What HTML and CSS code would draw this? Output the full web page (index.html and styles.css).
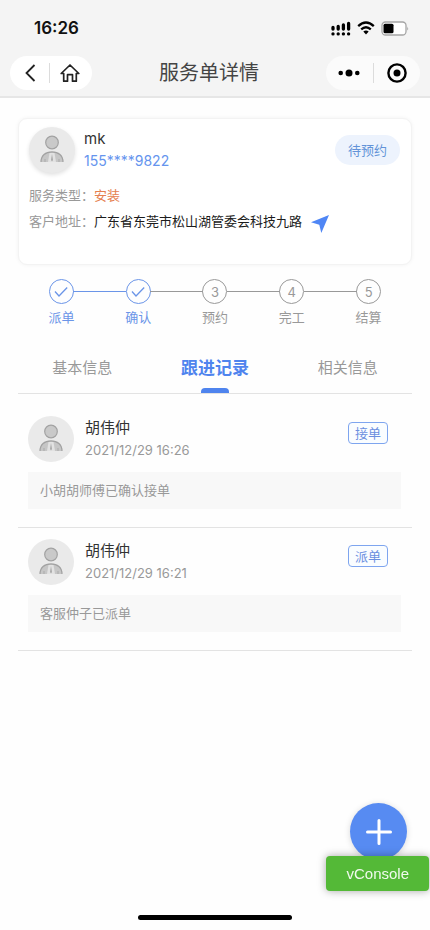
FILE: index.html
```html
<!DOCTYPE html>
<html lang="zh-CN">
<head>
<meta charset="utf-8">
<meta name="viewport" content="width=device-width, initial-scale=1">
<title>服务单详情</title>
<link rel="stylesheet" href="styles.css">
</head>
<body>
<svg class="defs" aria-hidden="true">
  <symbol id="person" viewBox="0 0 46 46">
    <circle cx="23" cy="15.500" r="6.300" fill="#c9c9c9" stroke="#a2a2a2" stroke-width="1.200"/>
    <path d="M12 35C12 28.500 16.500 25 23 25s11 3.500 11 10z" fill="#c6c6c6"/>
    <path d="M20.500 26 19 35h8l-1.500-9z" fill="#e2e2e2"/>
    <path d="m23 27-1 6 1 1.500 1-1.500z" fill="#a8a8a8"/>
    <path d="M12 35C12 28.500 16.500 24.800 23 24.800s11 3.700 11 10.200" fill="none" stroke="#a2a2a2" stroke-width="1.200"/>
    <path d="M16 32v3M30 32v3" stroke="#aaa"/>
  </symbol>
</svg>

<header class="header">
  <div class="status">
    <span class="time">16:26</span>
    <div class="signals">
      <svg width="20" height="15" viewBox="0 0 20 15" aria-label="信号">
        <g stroke="#000" stroke-width="3.300" stroke-linecap="round">
          <path d="M2 6.500V8M7.200 5.500V8M12.400 4V8M17.600 2.500V8"/>
          <path d="M2 12.800v.1M7.200 12.800v.1M12.400 12.800v.1M17.600 12.800v.1"/>
        </g>
      </svg>
      <svg width="18" height="14" viewBox="0 0 18 14" aria-label="无线网络">
        <g fill="none" stroke="#000" stroke-width="2.300">
          <path d="M1.200 5.200Q9-2.300 16.800 5.200"/>
          <path d="M4.200 8.400Q9 4 13.800 8.400"/>
        </g>
        <path d="M6.300 10.500Q9 8.600 11.700 10.500L9 13.400z"/>
      </svg>
      <svg width="28" height="15" viewBox="0 0 28 15" aria-label="电池">
        <rect x="1" y="1" width="24" height="13" rx="3.500" fill="#fff" stroke="#a5a5a5" stroke-width="1.300"/>
        <rect x="2.500" y="2.800" width="10" height="9.400" rx="1.500"/>
        <path d="M26.300 5.500q1.500 2 0 4z" fill="#999"/>
      </svg>
    </div>
  </div>
  <nav class="nav">
    <div class="capsule capsule-left">
      <button type="button" aria-label="返回">
        <svg width="20" height="20" viewBox="0 0 20 20" fill="none" stroke="#222" stroke-width="1.800"><path d="M14.500 2 6.500 10l8 8"/></svg>
      </button>
      <i class="divider"></i>
      <button type="button" aria-label="首页">
        <svg width="20" height="20" viewBox="0 0 20 20" fill="none" stroke="#222" stroke-width="1.700" stroke-linejoin="round"><path d="M1.200 10.500 10 2l8.800 8.500h-2.500v7.700h-3.800v-6.500h-5v6.500H3.700v-7.700z"/></svg>
      </button>
    </div>
    <h1 class="title">服务单详情</h1>
    <div class="capsule capsule-right">
      <button type="button" aria-label="更多">
        <svg width="22" height="20" viewBox="0 0 22 20"><circle cx="2.700" cy="10" r="2.300"/><circle cx="11" cy="10" r="3.500"/><circle cx="19.300" cy="10" r="2.300"/></svg>
      </button>
      <i class="divider"></i>
      <button type="button" aria-label="关闭">
        <svg width="20" height="20" viewBox="0 0 20 20"><circle cx="10" cy="10" r="8.600" fill="none" stroke="#000" stroke-width="2.400"/><circle cx="10" cy="10" r="3.500"/></svg>
      </button>
    </div>
  </nav>
</header>

<main>
  <section class="card">
    <div class="customer">
      <svg class="avatar avatar-raised" aria-hidden="true"><use href="#person"/></svg>
      <div class="who">
        <span class="customer-name">mk</span>
        <a class="phone" href="#phone">155****9822</a>
      </div>
      <span class="state">待预约</span>
    </div>
    <dl class="facts">
      <div class="fact"><dt>服务类型：</dt><dd class="service">安装</dd></div>
      <div class="fact">
        <dt>客户地址：</dt><dd>广东省东莞市松山湖管委会科技九路</dd>
        <dd><a class="locate" href="#map" aria-label="导航"><svg width="18" height="18" viewBox="0 0 18 18" fill="#4f86f5"><path d="M18 0 10.300 18 8.300 9.700 0 7.300z"/></svg></a></dd>
      </div>
    </dl>
  </section>

  <ol class="steps">
    <li class="step done linked"><span class="dot"><svg width="14" height="12" viewBox="0 0 14 12" fill="none" stroke="#6b95e8" stroke-width="1.300"><path d="m1 5.500 4 4.500L13.200 1.500"/></svg></span><span>派单</span></li>
    <li class="step done"><span class="dot"><svg width="14" height="12" viewBox="0 0 14 12" fill="none" stroke="#6b95e8" stroke-width="1.300"><path d="m1 5.500 4 4.500L13.200 1.500"/></svg></span><span>确认</span></li>
    <li class="step"><span class="dot">3</span><span>预约</span></li>
    <li class="step"><span class="dot">4</span><span>完工</span></li>
    <li class="step"><span class="dot">5</span><span>结算</span></li>
  </ol>

  <div class="tabs" role="tablist">
    <button class="tab" type="button" role="tab" aria-selected="false">基本信息</button>
    <button class="tab active" type="button" role="tab" aria-selected="true">跟进记录</button>
    <button class="tab" type="button" role="tab" aria-selected="false">相关信息</button>
  </div>

  <div class="records">
    <article class="record">
      <div class="record-head">
        <svg class="avatar" aria-hidden="true"><use href="#person"/></svg>
        <div class="who">
          <span class="name">胡伟仲</span>
          <time class="date">2021/12/29 16:26</time>
        </div>
        <span class="tag">接单</span>
      </div>
      <p class="message">小胡胡师傅已确认接单</p>
    </article>
    <article class="record">
      <div class="record-head">
        <svg class="avatar" aria-hidden="true"><use href="#person"/></svg>
        <div class="who">
          <span class="name">胡伟仲</span>
          <time class="date">2021/12/29 16:21</time>
        </div>
        <span class="tag">派单</span>
      </div>
      <p class="message">客服仲子已派单</p>
    </article>
  </div>
</main>

<button class="add" type="button" aria-label="新增">
  <svg width="26" height="26" viewBox="0 0 26 26" stroke="#fff" stroke-width="3" stroke-linecap="round"><path d="M13 1.500v23M1.500 13h23"/></svg>
</button>
<button class="console" type="button">vConsole</button>
<div class="home-bar"></div>
</body>
</html>
```
FILE: styles.css
```css
* { box-sizing: border-box; }

body {
  margin: 0;
  min-height: 100vh;
  background: #fefefe;
  color: #333;
  font: 13px/20px Inter, "Noto Sans CJK SC", sans-serif;
}

h1, p, ol, dl, dd { margin: 0; padding: 0; font-weight: 400; }
button { margin: 0; padding: 0; border: 0; background: none; font: inherit; color: inherit; }
a { color: inherit; text-decoration: none; }
svg { display: block; }
.defs { position: absolute; width: 0; height: 0; }

.header { background: #f4f4f4; border-bottom: 2px solid #e6e6e6; }

.status {
  display: flex;
  align-items: center;
  justify-content: space-between;
  height: 56px;
  padding: 0 21px 0 34px;
}
.time { color: #111; font-size: 17px; font-weight: 600; }
.signals { display: flex; align-items: center; gap: 6px; }

.nav {
  display: grid;
  grid-template-columns: auto 1fr auto;
  align-items: center;
  padding: 0 10px 6px;
}
.title { font-size: 20px; line-height: 34px; color: #444; text-align: center; }
.capsule { display: flex; align-items: center; height: 34px; border-radius: 17px; }
.capsule button { display: flex; justify-content: center; flex: 1; }
.capsule-left { width: 82px; padding-right: 3px; background: #fff; }
.capsule-right { width: 94px; background: #fbfbfb; }
.divider { width: 1px; height: 20px; background: #dcdcdc; }

.card {
  min-height: 147px;
  margin: 20px 18px 0;
  padding: 8px 11px 8px 10px;
  border: 1px solid #f3f3f3;
  border-radius: 9px;
  background: #fff;
  box-shadow: 0 0 4px rgba(0, 0, 0, .05);
}
.customer { display: flex; align-items: center; gap: 9px; }
.avatar { width: 46px; height: 46px; border-radius: 50%; background: #eaeaea; }
.avatar-raised { box-shadow: 0 2px 4px rgba(0, 0, 0, .12); }
.who { display: flex; flex-direction: column; flex: 1; line-height: 22px; }
.customer-name { font-size: 15px; }
.phone { color: #6594ee; font-size: 14px; }
.state {
  padding: 0 13px;
  border-radius: 15px;
  background: #edf3fd;
  color: #6393d8;
  line-height: 30px;
}
.facts { padding-top: 9px; }
.fact { display: flex; align-items: center; height: 26px; }
.fact dt { color: #999; }
.fact dd { color: #1c1c1c; }
.fact .service { color: #e58050; }
.locate { display: block; padding: 6px 0 0 9px; }

.steps { display: flex; margin: 14px 23px 0; list-style: none; }
.step {
  position: relative;
  display: flex;
  flex: 1;
  flex-direction: column;
  align-items: center;
  gap: 3px;
  color: #999;
}
.dot {
  display: flex;
  align-items: center;
  justify-content: center;
  width: 25px;
  height: 25px;
  border: 1px solid #999;
  border-radius: 50%;
}
.step:not(:last-child)::after {
  content: "";
  position: absolute;
  top: 12px;
  left: calc(50% + 12px);
  width: calc(100% - 24px);
  height: 1px;
  background: #999;
}
.step.linked::after { background: #6b95e8; }
.done { color: #6b95e8; }
.done .dot { border-color: #6b95e8; }

.tabs { display: grid; grid-template-columns: repeat(3, 1fr); margin: 16px 16px 0; }
.tab { position: relative; height: 50px; color: #999; font-size: 15px; }
.tab.active { color: #4f84ee; font-size: 17px; font-weight: 700; }
.tab.active::after {
  content: "";
  position: absolute;
  bottom: 0;
  left: calc(50% - 14px);
  width: 28px;
  height: 5px;
  border-radius: 4px 4px 0 0;
  background: #4f84ee;
}

.records { margin: 0 18px; padding-top: 11px; border-top: 1px solid #e3e3e3; }
.record { padding: 11px 11px 18px 10px; border-bottom: 1px solid #e3e3e3; }
.record-head { display: flex; align-items: center; gap: 11px; }
.name { font-size: 15px; }
.date { color: #999; }
.tag {
  align-self: flex-start;
  margin: 6px 13px 0 0;
  padding: 0 6px;
  border: 1px solid #7ea5ef;
  border-radius: 4px;
  background: #fafdff;
  color: #6b8fdf;
}
.message {
  margin-top: 10px;
  padding: 0 12px;
  background: #f8f8f8;
  color: #999;
  line-height: 37px;
}

.add {
  position: fixed;
  right: 23px;
  bottom: 70px;
  display: flex;
  align-items: center;
  justify-content: center;
  width: 57px;
  height: 57px;
  border-radius: 50%;
  background: #578bf2;
  box-shadow: 0 1px 6px rgba(0, 0, 0, .15);
}
.console {
  position: fixed;
  right: 1px;
  bottom: 39px;
  padding: 0 20px;
  border-radius: 4px;
  background: #54b937;
  box-shadow: 0 0 8px rgba(0, 0, 0, .35);
  color: #f0faed;
  font: 15px/35px "Liberation Sans", sans-serif;
}
.home-bar {
  position: fixed;
  bottom: 10px;
  left: calc(50% - 77px);
  width: 154px;
  height: 5px;
  border-radius: 3px;
  background: #000;
}
```
